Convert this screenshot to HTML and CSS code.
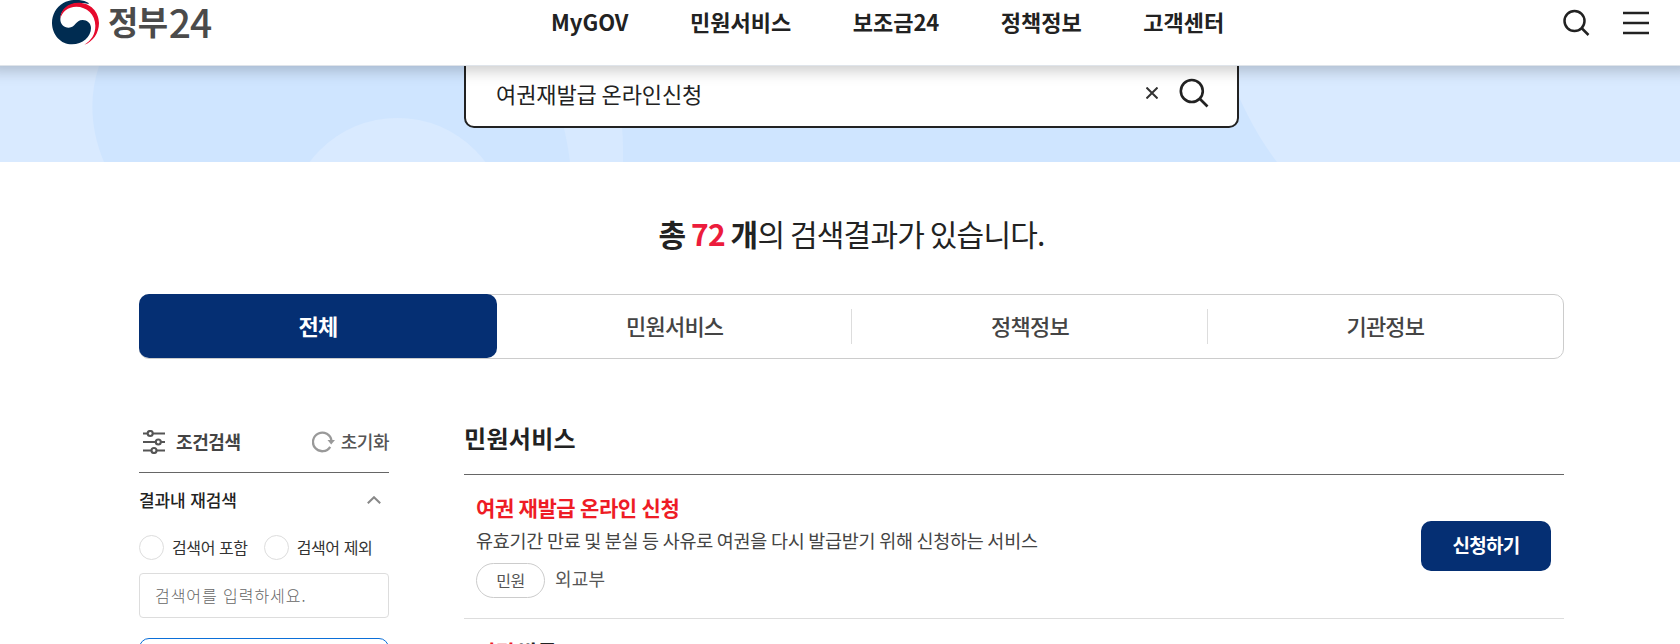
FILE: index.html
```html
<!DOCTYPE html>
<html lang="ko">
<head>
<meta charset="utf-8">
<title>정부24 통합검색</title>
<link rel="stylesheet" href="styles.css">
</head>
<body>
<header class="header">
  <a class="logo">
    <svg class="logo-mark" width="48" height="46" viewBox="0 0 144 138">
      <path fill="#002c51" d="M110 9C92-3 58-4 34 9C12 22 0 45 0 68C0 105 27 133 60 133C92 133 117 111 117 84C117 69 105 60 92 60C70 60 71 83 50 83C35 83 25 73 25 57C25 35 44 14 74 10C86 8 98 9 110 12Z"/>
      <path fill="#e60a2d" d="M25 57C25 27 49 8 79 8C115 8 141 35 141 69C141 100 122 126 97 134C118 121 130 103 130 77C130 43 104 20 73 20C48 20 29 36 25 57Z"/>
    </svg>
    <span class="logo-text">정부</span><span class="logo-num">24</span>
  </a>
  <nav class="nav">
    <a>MyGOV</a><a>민원서비스</a><a>보조금24</a><a>정책정보</a><a>고객센터</a>
  </nav>
  <div class="tools">
    <svg width="28" height="28" viewBox="0 0 28 28" fill="none" stroke="#222" stroke-width="2.5"><circle cx="11.5" cy="12" r="10"/><path d="M18.5 19l7 7"/></svg>
    <svg width="26" height="28" viewBox="0 0 26 28" stroke="#222" stroke-width="2.5"><path d="M0 4h26M0 14h26M0 24h26"/></svg>
  </div>
</header>
<section class="banner">
  <svg class="banner-art" width="1680" height="96" viewBox="0 66 1680 96">
    <path fill="#cfe5ff" d="M99 66C89 96 90 129 104 162H1277Q1249 126 1226 66Z"/>
    <circle cx="397.5" cy="228" r="110" fill="#d9eaff"/>
    <path fill="#d7e9ff" d="M545 66Q565 120 570 162H623Q624 110 612 66Z"/>
  </svg>
  <div class="search">
    <span class="search-text">여권재발급 온라인신청</span>
    <svg class="search-clear" width="12" height="12" viewBox="0 0 12 12" stroke="#333" stroke-width="2"><path d="M.5.5l11 11M11.5.5l-11 11"/></svg>
    <svg width="30" height="30" viewBox="0 0 30 30" fill="none" stroke="#222" stroke-width="2.6"><circle cx="12.8" cy="13" r="11"/><path d="M20.5 20.5l8 8"/></svg>
  </div>
</section>
<main class="main">
  <h1 class="summary"><b>총 <em>72</em> 개</b>의 검색결과가 있습니다.</h1>
  <div class="tabs">
    <a class="tab tab-active">전체</a><a class="tab">민원서비스</a><a class="tab">정책정보</a><a class="tab">기관정보</a>
  </div>
  <div class="columns">
    <aside class="side">
      <div class="side-head">
        <svg width="24" height="24" viewBox="0 0 24 24" fill="none" stroke="#555" stroke-width="2.1"><path d="M1 3.5h4.7M11 3.5h12M1 12h12.6M19 12h4M1 20.5h8.3M15 20.5h8"/><circle cx="8.2" cy="3.5" r="2.5"/><circle cx="16.3" cy="12" r="2.5"/><circle cx="12" cy="20.5" r="2.5"/></svg>
        <strong class="side-title">조건검색</strong>
        <svg width="23" height="22" viewBox="0 0 23 22"><path fill="none" stroke="#999" stroke-width="2.3" d="M19.5 9.8A9.3 9.3 0 1 0 18.2 15.8"/><path fill="#999" d="M15.5 9H23L19.2 13.6Z"/></svg>
        <span class="reset">초기화</span>
      </div>
      <div class="side-sub">
        <span>결과내 재검색</span>
        <svg width="14" height="8" viewBox="0 0 14 8" fill="none" stroke="#888" stroke-width="2"><path d="M.8 7.3L7 1.2l6.2 6.1"/></svg>
      </div>
      <div class="radios">
        <label class="radio"><i class="dot"></i><span>검색어 포함</span></label>
        <label class="radio"><i class="dot"></i><span>검색어 제외</span></label>
      </div>
      <div class="field">검색어를 입력하세요.</div>
      <div class="side-button"></div>
    </aside>
    <section class="results">
      <h2 class="results-title">민원서비스</h2>
      <article class="item">
        <div class="item-body">
          <h3 class="item-title">여권 재발급 온라인 신청</h3>
          <p class="item-desc">유효기간 만료 및 분실 등 사유로 여권을 다시 발급받기 위해 신청하는 서비스</p>
          <div class="meta"><span class="pill">민원</span><span class="agency">외교부</span></div>
        </div>
        <a class="apply">신청하기</a>
      </article>
      <article class="item">
        <h3 class="item-title"><span>여권</span> <span class="plain">발급</span></h3>
      </article>
    </section>
  </div>
</main>
</body>
</html>
```
FILE: styles.css
```css
* { box-sizing: border-box; }
html, body { height: 644px; overflow: hidden; }
body {
  margin: 0;
  background: #fff;
  color: #222;
  font-family: "Noto Sans CJK KR", "Noto Sans", sans-serif;
}
h1, h2, h3, p { margin: 0; }
.header {
  position: relative;
  z-index: 2;
  height: 66px;
  padding: 0 31px 0 52px;
  display: flex;
  align-items: flex-start;
  background: #fff;
  border-bottom: 1px solid #dfe4ea;
  box-shadow: 0 -7px 14px 12px rgba(0, 0, 0, .2);
}
.logo { display: flex; width: 499px; }
.logo-mark { flex: none; overflow: visible; }
.logo-text {
  margin-left: 8px;
  color: #4b4b4b;
  font-size: 33px;
  font-weight: 700;
  line-height: 42px;
  letter-spacing: -.5px;
}
.logo-num { margin-left: 1px; color: #4b4b4b; font-size: 39px; font-weight: 500; letter-spacing: -1px; line-height: 42px; }
.nav {
  display: flex;
  gap: 61.5px;
  font-size: 22px;
  font-weight: 700;
  line-height: 43px;
}
.tools { margin: 9px 0 0 auto; display: flex; gap: 32px; }
.tools svg { display: block; }
.banner { position: relative; height: 96px; background: #d9eaff; overflow: hidden; }
.banner-art { position: absolute; left: 0; top: 0; }
.search {
  position: relative;
  width: 775px;
  height: 82px;
  margin: -20px 0 0 464px;
  padding: 12px 28px 0 30px;
  display: flex;
  align-items: center;
  background: #fff;
  border: 2px solid #222;
  border-radius: 10px;
}
.search-text { flex: 1; padding-bottom: 1px; font-size: 22px; letter-spacing: -.1px; word-spacing: -1.2px; }
.search-clear { margin-right: 21px; }
.main { width: 1425px; margin-left: 139px; }
.summary {
  padding-top: 49px;
  height: 132px;
  font-size: 30px;
  font-weight: 400;
  line-height: 44px;
  letter-spacing: -.8px;
  word-spacing: -1.8px;
  text-align: center;
}
.summary em { color: #ec1c3c; font-style: normal; }
.tabs { display: flex; height: 65px; border: 1px solid #ccc; border-radius: 10px; }
.tab {
  position: relative;
  flex: 1;
  display: flex;
  align-items: center;
  justify-content: center;
  padding: 0 0 3px 0;
  color: #444;
  font-size: 22px;
  font-weight: 500;
  letter-spacing: -.8px;
}
.tab + .tab + .tab::before { content: ""; position: absolute; left: -1px; top: 14px; width: 1px; height: 35px; background: #ddd; }
.tab-active { margin: -1px 0 0 -1px; flex: 0 0 358px; background: #052f73; color: #fff; font-weight: 700; border-radius: 10px; }
.columns { display: flex; gap: 75px; }
.side { width: 250px; padding-top: 53px; }
.side-head {
  display: flex;
  align-items: center;
  height: 61px;
  padding-left: 3px;
  border-bottom: 1px solid #666;
  color: #444;
}
.side-title { margin: 0 auto 0 10px; padding-bottom: 2px; font-size: 18px; letter-spacing: -.4px; }
.reset { margin-left: 6px; padding-bottom: 2px; color: #555; font-size: 18px; font-weight: 500; letter-spacing: -.5px; }
.side-sub {
  display: flex;
  align-items: center;
  justify-content: space-between;
  height: 56px;
  padding: 0 8px 2px 0;
  font-size: 17px;
  font-weight: 500;
}
.side-sub span { padding-bottom: 2px; letter-spacing: -.1px; }
.radios { display: flex; gap: 16px; height: 40px; padding-top: 6px; }
.radio { display: flex; align-items: center; height: 25px; color: #333; font-size: 16px; letter-spacing: -.4px; }
.radio span { padding-bottom: 2px; }
.dot { width: 25px; height: 25px; margin-right: 8px; border: 1px solid #ddd; border-radius: 50%; }
.field {
  height: 45px;
  margin-top: 4px;
  padding: 0 15px;
  border: 1px solid #ddd;
  border-radius: 4px;
  color: #666;
  font-size: 16px;
  font-weight: 300;
  line-height: 42px;
  letter-spacing: .95px;
}
.side-button { height: 50px; margin-top: 20px; border: 1px solid #0b6fd8; border-radius: 10px; }
.results { flex: 1; }
.results-title {
  height: 116px;
  padding-top: 61px;
  border-bottom: 1px solid #666;
  font-size: 24px;
  line-height: 36px;
  letter-spacing: .3px;
}
.item { display: flex; height: 144px; padding: 15px 13px 0 12px; border-bottom: 1px solid #ddd; }
.item-body { flex: 1; }
.item-title { color: #ee1c25; font-size: 21px; line-height: 34px; letter-spacing: -.42px; word-spacing: -.7px; }
.plain { color: #222; }
.item-desc { color: #444; font-size: 18.5px; line-height: 33px; letter-spacing: -.23px; word-spacing: -1.2px; }
.meta { display: flex; margin-top: 6px; color: #555; }
.pill {
  width: 69px;
  height: 35px;
  border: 1px solid #ccc;
  border-radius: 18px;
  font-size: 16px;
  line-height: 32px;
  letter-spacing: -.4px;
  text-align: center;
}
.agency { margin-left: 10px; font-size: 18px; line-height: 30px; letter-spacing: .2px; }
.apply {
  width: 130px;
  height: 50px;
  margin-top: 31px;
  background: #052f73;
  border-radius: 10px;
  color: #fff;
  font-size: 19px;
  font-weight: 700;
  line-height: 48px;
  letter-spacing: -.7px;
  text-align: center;
}
```
